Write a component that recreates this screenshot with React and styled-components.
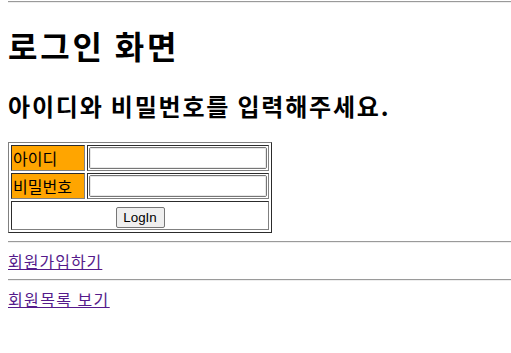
import React from "react";
import styled, { createGlobalStyle } from "styled-components";

const GlobalStyle = createGlobalStyle`
  body {
    margin: 0 0 0 8px;
    background: #ffffff;
    color: #000000;
    font-family: "Noto Sans CJK KR", "Liberation Sans", sans-serif;
    font-size: 16px;
  }
`;

const Divider = styled.hr`
  margin: ${(p) => (p.$first ? "1px 0 0" : "8px 0")};
  border: 0;
  border-top: 1px solid #9a9a9a;
  border-bottom: 1px solid #eeeeee;
  height: 0;
`;

const Title = styled.h1`
  margin: 22px 0 26px;
  font-size: 32px;
  line-height: 40px;
  font-weight: 700;
  letter-spacing: 2.8px;
`;

const SubTitle = styled.h2`
  margin: 0 0 21px;
  font-size: 24px;
  line-height: 30px;
  font-weight: 700;
  letter-spacing: 1.8px;
`;

const LoginTable = styled.table`
  border: 1px outset grey;
  border-spacing: 2px;
  border-collapse: separate;
`;

const Label = styled.td`
  border: 1px inset grey;
  background: orange;
  padding: 0 1px;
  height: 24px;
  width: 70px;
  font-size: 16px;
  line-height: 24px;
  white-space: nowrap;
`;

const Field = styled.td`
  border: 1px inset grey;
  padding: 1px;
  height: 22px;
`;

const TextInput = styled.input`
  display: block;
  box-sizing: border-box;
  width: 178px;
  height: 22px;
  margin: 0;
  border: 1px solid #767676;
  border-radius: 2px;
  outline: 1px solid #e8e8e8;
  outline-offset: -2px;
  padding: 1px 2px;
  font-family: "Liberation Sans", sans-serif;
  font-size: 13.33px;
`;

const ButtonCell = styled.td`
  border: 1px inset grey;
  padding: 0;
  height: 27px;
  text-align: center;
`;

const SubmitButton = styled.button`
  box-sizing: border-box;
  width: 49px;
  height: 21px;
  margin: 0;
  padding: 0 5px;
  background: #efefef;
  border: 1px solid #767676;
  border-radius: 2px;
  color: #000000;
  font-family: "Liberation Sans", sans-serif;
  font-size: 13.33px;
  line-height: 17px;
  vertical-align: middle;
`;

const LinkLine = styled.div`
  line-height: 20px;
`;

const PageLink = styled.a`
  color: #551a8b;
  text-decoration: underline;
  text-underline-offset: 1px;
  letter-spacing: ${(p) => p.$spacing || "1px"};
`;

export default function App() {
  return (
    <>
      <GlobalStyle />
      <Divider $first />
      <Title>로그인 화면</Title>
      <SubTitle>아이디와 비밀번호를 입력해주세요.</SubTitle>
      <form onSubmit={(e) => e.preventDefault()}>
        <LoginTable>
          <tbody>
            <tr>
              <Label>아이디</Label>
              <Field>
                <TextInput type="text" name="id" />
              </Field>
            </tr>
            <tr>
              <Label>비밀번호</Label>
              <Field>
                <TextInput type="password" name="pw" />
              </Field>
            </tr>
            <tr>
              <ButtonCell colSpan={2}>
                <SubmitButton type="submit">LogIn</SubmitButton>
              </ButtonCell>
            </tr>
          </tbody>
        </LoginTable>
      </form>
      <Divider />
      <LinkLine>
        <PageLink href="#join">회원가입하기</PageLink>
      </LinkLine>
      <Divider />
      <LinkLine>
        <PageLink href="#list" $spacing="1.4px">
          회원목록 보기
        </PageLink>
      </LinkLine>
    </>
  );
}
